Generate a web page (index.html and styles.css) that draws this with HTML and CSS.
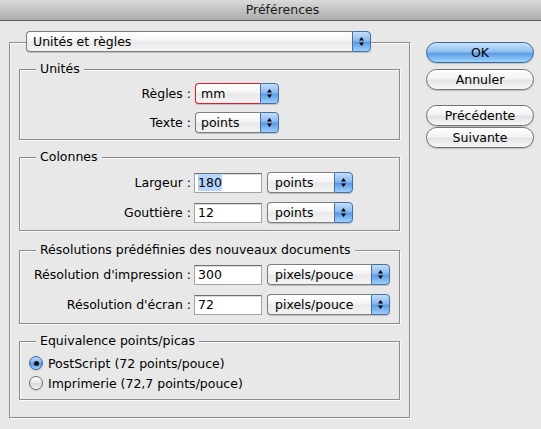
FILE: index.html
```html
<!DOCTYPE html>
<html lang="fr">
<head>
<meta charset="utf-8">
<title>Préférences</title>
<link rel="stylesheet" href="styles.css">
</head>
<body>
<div class="window">
  <div class="titlebar">Préférences</div>
  <div class="main">
    <div class="panel">
      <div class="popup section-popup">
        <span class="popup-label">Unités et règles</span>
        <span class="popup-arrows"><svg width="7" height="11" viewBox="0 0 7 11"><path d="M1 4.5L3.5 1L6 4.5Z M1 6.5L3.5 10L6 6.5Z" fill="#000"/></svg></span>
      </div>

      <div class="group group-units">
        <div class="group-title">Unités</div>
        <div class="rows rows-units">
          <span class="row-label">Règles&nbsp;:</span>
          <div class="popup popup-units error">
            <span class="popup-label">mm</span>
            <span class="popup-arrows"><svg width="7" height="11" viewBox="0 0 7 11"><path d="M1 4.5L3.5 1L6 4.5Z M1 6.5L3.5 10L6 6.5Z" fill="#000"/></svg></span>
          </div>
          <span class="row-label">Texte&nbsp;:</span>
          <div class="popup popup-units">
            <span class="popup-label">points</span>
            <span class="popup-arrows"><svg width="7" height="11" viewBox="0 0 7 11"><path d="M1 4.5L3.5 1L6 4.5Z M1 6.5L3.5 10L6 6.5Z" fill="#000"/></svg></span>
          </div>
        </div>
      </div>

      <div class="group group-cols">
        <div class="group-title">Colonnes</div>
        <div class="rows rows-cols">
          <span class="row-label">Largeur&nbsp;:</span>
          <div class="field"><span class="selected">180</span></div>
          <div class="popup popup-cols">
            <span class="popup-label">points</span>
            <span class="popup-arrows"><svg width="7" height="11" viewBox="0 0 7 11"><path d="M1 4.5L3.5 1L6 4.5Z M1 6.5L3.5 10L6 6.5Z" fill="#000"/></svg></span>
          </div>
          <span class="row-label">Gouttière&nbsp;:</span>
          <div class="field">12</div>
          <div class="popup popup-cols">
            <span class="popup-label">points</span>
            <span class="popup-arrows"><svg width="7" height="11" viewBox="0 0 7 11"><path d="M1 4.5L3.5 1L6 4.5Z M1 6.5L3.5 10L6 6.5Z" fill="#000"/></svg></span>
          </div>
        </div>
      </div>

      <div class="group group-res">
        <div class="group-title">Résolutions prédéfinies des nouveaux documents</div>
        <div class="rows rows-res">
          <span class="row-label">Résolution d'impression&nbsp;:</span>
          <div class="field">300</div>
          <div class="popup popup-res">
            <span class="popup-label">pixels/pouce</span>
            <span class="popup-arrows"><svg width="7" height="11" viewBox="0 0 7 11"><path d="M1 4.5L3.5 1L6 4.5Z M1 6.5L3.5 10L6 6.5Z" fill="#000"/></svg></span>
          </div>
          <span class="row-label">Résolution d'écran&nbsp;:</span>
          <div class="field">72</div>
          <div class="popup popup-res">
            <span class="popup-label">pixels/pouce</span>
            <span class="popup-arrows"><svg width="7" height="11" viewBox="0 0 7 11"><path d="M1 4.5L3.5 1L6 4.5Z M1 6.5L3.5 10L6 6.5Z" fill="#000"/></svg></span>
          </div>
        </div>
      </div>

      <div class="group group-eq">
        <div class="group-title">Equivalence points/picas</div>
        <div class="radios">
          <div class="radio-row"><span class="radio on"><span class="dot"></span></span><span>PostScript (72 points/pouce)</span></div>
          <div class="radio-row"><span class="radio"></span><span>Imprimerie (72,7 points/pouce)</span></div>
        </div>
      </div>
    </div>

    <div class="buttons">
      <div class="btn default">OK</div>
      <div class="btn btn-cancel">Annuler</div>
      <div class="btn btn-prev">Précédente</div>
      <div class="btn btn-next">Suivante</div>
    </div>
  </div>
</div>
</body>
</html>
```

FILE: styles.css
```css
html, body {
  margin: 0;
  padding: 0;
}
body {
  background: #e8e8e8;
  font-family: "DejaVu Sans", "Liberation Sans", sans-serif;
  font-size: 12.5px;
  color: #000;
}
.window {
  width: 541px;
  height: 429px;
  overflow: hidden;
}
.titlebar {
  height: 20px;
  line-height: 20px;
  border-bottom: 1px solid #5e5e5e;
  background: linear-gradient(#dadada, #acacac);
  text-align: center;
  padding-left: 24px;
  color: #1a1a1a;
}
.main {
  display: flex;
  align-items: flex-start;
  padding: 21px 0 0 9px;
}
.panel {
  box-sizing: border-box;
  width: 401px;
  border: 1px solid #8d8d8d;
  box-shadow: inset 1px 1px 0 #fbfbfb, 1px 1px 0 #fbfbfb;
  padding: 0 9px 17px 9px;
  display: flex;
  flex-direction: column;
}

/* popup menus */
.popup {
  display: flex;
  height: 21px;
  box-sizing: border-box;
  border-radius: 4px;
  box-shadow: 0 1px 1px rgba(0, 0, 0, 0.18);
}
.popup-label {
  flex: 1;
  border: 1px solid #7d7d7d;
  border-right: none;
  border-radius: 4px 0 0 4px;
  background: linear-gradient(#ffffff 0%, #f6f6f6 40%, #e9e9e9 55%, #f4f4f4 100%);
  padding-left: 6px;
  line-height: 19px;
  white-space: nowrap;
}
.popup-arrows {
  width: 19px;
  box-sizing: border-box;
  border: 1px solid #466fa6;
  border-radius: 0 4px 4px 0;
  background: linear-gradient(#c4def8 0%, #8ab9ef 45%, #5e9be3 55%, #9fd0fd 100%);
  display: flex;
  align-items: center;
  justify-content: center;
}
.popup.error .popup-label {
  border-color: #e2192b;
}
.section-popup {
  width: 345px;
  margin: -12px 0 0 7px;
}
.section-popup .popup-label {
  padding-left: 6px;
}
.popup-units {
  width: 84px;
}
.popup-units .popup-label {
  padding-left: 5px;
}
.popup-cols {
  width: 86px;
}
.popup-res {
  width: 123px;
}
.popup-cols .popup-label,
.popup-res .popup-label {
  padding-left: 7px;
}

/* group boxes */
.group {
  border: 1px solid #8d8d8d;
  box-shadow: inset 1px 1px 0 #fbfbfb, 1px 1px 0 #fbfbfb;
  display: flex;
  flex-direction: column;
  align-items: flex-start;
}
.group-title {
  margin: -9px 0 0 16px;
  padding: 0 4px;
  height: 16px;
  line-height: 16px;
  background: #e8e8e8;
  white-space: nowrap;
}
.group-units {
  margin-top: 17px;
  padding-bottom: 6px;
}
.group-cols {
  margin-top: 17px;
  padding-bottom: 7px;
}
.group-res {
  margin-top: 19px;
  padding-bottom: 8px;
}
.group-eq {
  margin-top: 17px;
  padding-bottom: 6px;
}

.rows {
  display: grid;
  align-items: center;
  grid-auto-rows: 21px;
}
.rows-units {
  margin-top: 6px;
  grid-template-columns: 171px 84px;
  column-gap: 4px;
  row-gap: 8px;
}
.rows-cols {
  margin-top: 7px;
  grid-template-columns: 171px 70px 86px;
  column-gap: 3px;
  row-gap: 9px;
}
.rows-res {
  margin-top: 6px;
  grid-template-columns: 171px 70px 123px;
  column-gap: 3px;
  row-gap: 9px;
}
.row-label {
  text-align: right;
  white-space: nowrap;
}

/* text fields */
.field {
  width: 68px;
  height: 20px;
  box-sizing: border-box;
  border: 1px solid #a3a3a3;
  border-top-color: #6f6f6f;
  background: #fff;
  box-shadow: inset 0 1px 0 #dcdcdc;
  padding-left: 3px;
  line-height: 18px;
}
.selected {
  background: #b5d5ff;
  padding: 1px 0;
}

/* radios */
.radios {
  margin-top: 4px;
  display: flex;
  flex-direction: column;
}
.radio-row {
  height: 20px;
  display: flex;
  align-items: center;
  gap: 5px;
  padding-left: 9px;
}
.radio {
  width: 14px;
  height: 14px;
  box-sizing: border-box;
  border-radius: 50%;
  border: 1px solid #6f6f6f;
  background: linear-gradient(#fdfdfd, #e6e6e6 50%, #d6d6d6 55%, #f8f8f8);
  box-shadow: 0 1px 1px rgba(0, 0, 0, 0.15);
  display: flex;
  align-items: center;
  justify-content: center;
}
.radio.on {
  border-color: #3f679c;
  background: linear-gradient(#bcd9f7, #7eb3ec 45%, #5796e1 55%, #9fd0fd);
}
.dot {
  width: 5px;
  height: 5px;
  border-radius: 50%;
  background: #111;
}

/* buttons */
.buttons {
  display: flex;
  flex-direction: column;
  margin-left: 16px;
  margin-top: 0;
}
.btn {
  width: 108px;
  height: 21px;
  box-sizing: border-box;
  border: 1px solid #727272;
  border-radius: 11px;
  background: linear-gradient(#ffffff 0%, #f3f3f3 45%, #e4e4e4 55%, #f6f6f6 100%);
  box-shadow: 0 1px 1px rgba(0, 0, 0, 0.18);
  text-align: center;
  line-height: 19px;
}
.btn.default {
  border-color: #3d679c;
  background: linear-gradient(#c8e1fa 0%, #92c1f1 45%, #5e9de5 55%, #9ad4fe 100%);
}
.btn-cancel {
  margin-top: 6px;
}
.btn-prev {
  margin-top: 15px;
}
.btn-next {
  margin-top: 1px;
}
```
